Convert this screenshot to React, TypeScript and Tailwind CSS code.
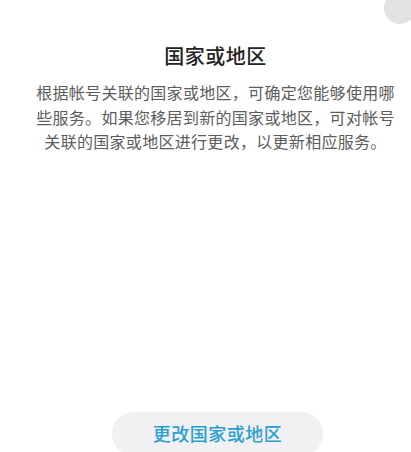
import React from "react";

export default function App() {
  const font = { fontFamily: '"Noto Sans CJK SC", "Noto Sans", sans-serif' };
  return (
    <div
      className="relative flex h-[452px] w-[411px] flex-col items-center overflow-hidden bg-white"
      style={font}
    >
      <div className="absolute left-[384px] top-[-8px] h-[32px] w-[32px] rounded-full bg-[#e3e3e3]" />
      <div className="flex w-full flex-col items-center pl-[30px] pr-[10px] pt-[42px]">
        <h1 className="text-[20px] font-medium leading-[28px] tracking-[0.5px] text-[#222222]">
          国家或地区
        </h1>
        <p className="mt-[10px] text-center text-[16px] leading-[24.5px] tracking-[0.3px] text-[#5c5c5c]">
          根据帐号关联的国家或地区，可确定您能够使用哪些服务。如果您移居到新的国家或地区，可对帐号关联的国家或地区进行更改，以更新相应服务。
        </p>
      </div>
      <div className="flex-1" />
      <div className="mb-[-4px] ml-[24px] flex h-[44px] w-[211px] items-center justify-center rounded-full bg-[#f1f1f3] pb-[2px]">
        <span className="text-[18px] font-medium tracking-[0.5px] text-[#2a9fd0]">
          更改国家或地区
        </span>
      </div>
    </div>
  );
}
